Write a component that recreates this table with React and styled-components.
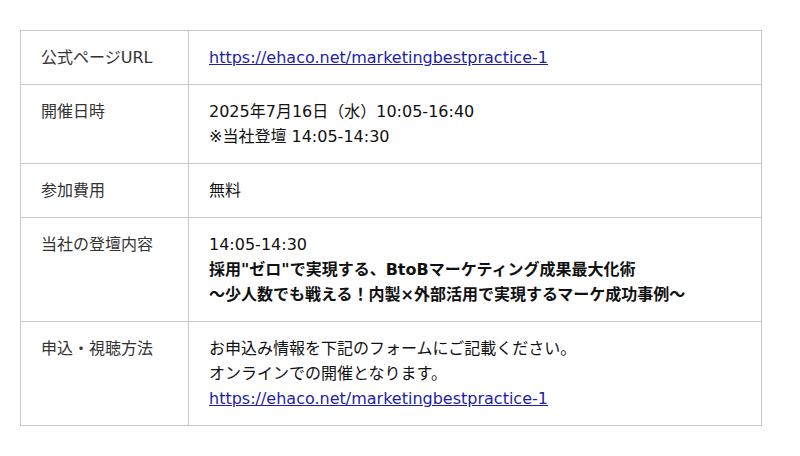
import React from 'react';
import styled, { createGlobalStyle } from 'styled-components';

const GlobalStyle = createGlobalStyle`
  body {
    margin: 0;
    background: #fff;
    font-family: "DejaVu Sans", "Noto Sans CJK JP", sans-serif;
  }
`;

const Page = styled.div`
  padding: 30px 38px 30px 20px;
`;

const InfoTable = styled.table`
  width: 742px;
  border-collapse: collapse;
  font-size: 16px;
  line-height: 25px;
  color: #111;
`;

const Label = styled.th`
  width: 127px;
  padding: 14px 20px;
  border: 1px solid #c8c8c8;
  text-align: left;
  vertical-align: top;
  font-weight: normal;
  color: #333;
`;

const Value = styled.td`
  padding: 14px 20px;
  border: 1px solid #c8c8c8;
  vertical-align: top;
`;

const Link = styled.a`
  color: #1d1da8;
  text-decoration: underline;
`;

const Strong = styled.strong`
  display: block;
  font-weight: bold;
`;

const URL = 'https://ehaco.net/marketingbestpractice-1';

const rows = [
  { label: '公式ページURL', value: <Link href={URL}>{URL}</Link> },
  {
    label: '開催日時',
    value: (
      <>
        2025年7月16日（水）10:05-16:40
        <br />
        ※当社登壇 14:05-14:30
      </>
    ),
  },
  { label: '参加費用', value: '無料' },
  {
    label: '当社の登壇内容',
    value: (
      <>
        14:05-14:30
        <Strong>採用"ゼロ"で実現する、BtoBマーケティング成果最大化術</Strong>
        <Strong>～少人数でも戦える！内製×外部活用で実現するマーケ成功事例～</Strong>
      </>
    ),
  },
  {
    label: '申込・視聴方法',
    value: (
      <>
        お申込み情報を下記のフォームにご記載ください。
        <br />
        オンラインでの開催となります。
        <br />
        <Link href={URL}>{URL}</Link>
      </>
    ),
  },
];

const App = () => (
  <Page>
    <GlobalStyle />
    <InfoTable>
      <tbody>
        {rows.map((row) => (
          <tr key={row.label}>
            <Label>{row.label}</Label>
            <Value>{row.value}</Value>
          </tr>
        ))}
      </tbody>
    </InfoTable>
  </Page>
);

export default App;
